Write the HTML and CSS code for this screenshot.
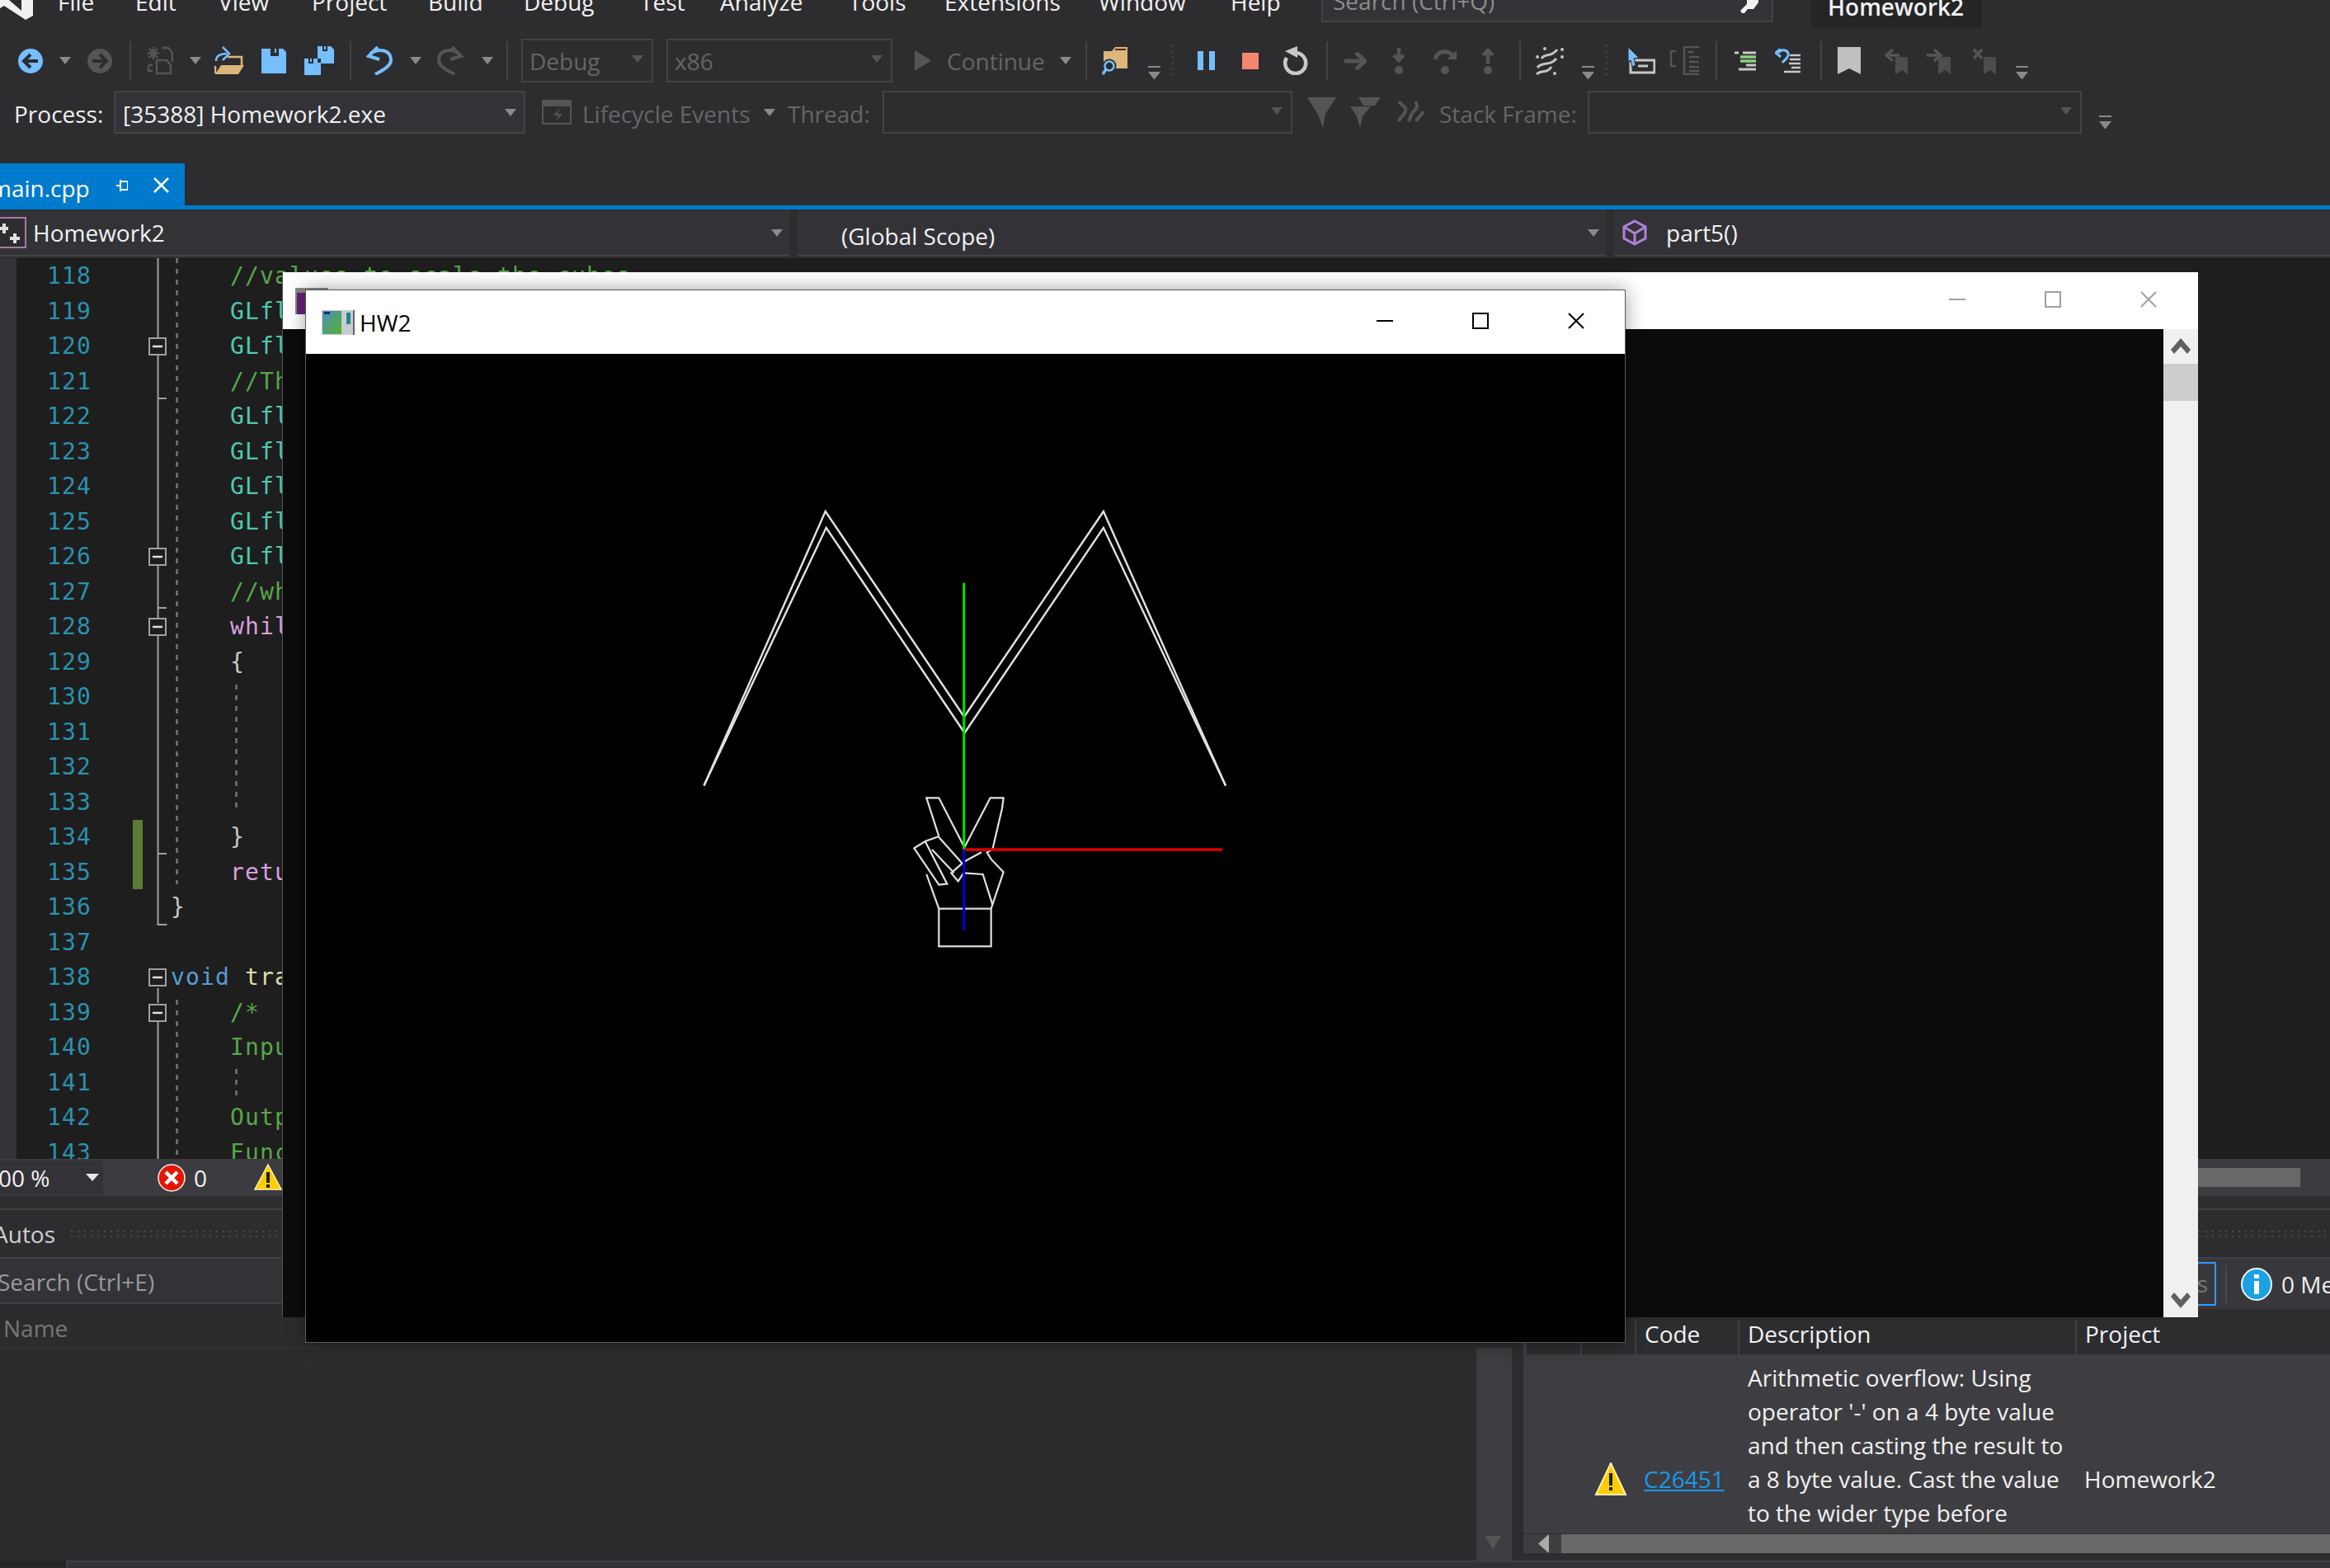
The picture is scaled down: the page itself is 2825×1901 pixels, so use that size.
FILE: index.html
```html
<!DOCTYPE html>
<html lang="en">
<head>
<meta charset="utf-8">
<title>Homework2 - Visual Studio</title>
<link rel="stylesheet" href="styles.css">
</head>
<body>
<div class="ide">
  <header class="menubar">
    <svg class="logo" width="40" height="25" viewBox="0 0 40 25"><path fill="#f1f1f1" d="M0 0h11l15 13V0h14v19l-9 5L5 7 0 10z"/></svg>
    <span class="mi">File</span><span class="mi">Edit</span><span class="mi">View</span><span class="mi">Project</span><span class="mi">Build</span><span class="mi">Debug</span><span class="mi">Test</span><span class="mi">Analyze</span><span class="mi">Tools</span><span class="mi">Extensions</span><span class="mi">Window</span><span class="mi">Help</span>
    <div class="search"><span class="search-text">Search (Ctrl+Q)</span>
      <svg class="search-key" width="34" height="16" viewBox="0 0 34 16"><path fill="#f1f1f1" d="M14 16l-2-3 8-8V0h14v3l-6 8h-7l-4 5z"/></svg></div>
    <span></span>
    <div class="title-tab">Homework2</div>
  </header>

  <div class="toolbar">
    <svg width="30" height="30" viewBox="0 0 30 30"><circle cx="15" cy="15" r="15" fill="#75beff"/><path d="M15 7l-8 8 8 8M8 15h16" fill="none" stroke="#2d2d30" stroke-width="4"/></svg>
    <i class="dd"></i>
    <svg width="30" height="30" viewBox="0 0 30 30"><circle cx="15" cy="15" r="15" fill="#555"/><path d="M15 7l8 8-8 8M22 15H6" fill="none" stroke="#2d2d30" stroke-width="4"/></svg>
    <i class="sep"></i>
    <svg width="32" height="35" viewBox="0 0 32 35"><path d="M8 1v15M1 8.500h14M3 3l10 11M13 3L3 14" stroke="#555" stroke-width="2.500"/><path d="M18 2h8l5 6v11M12 17v16h17V23l-5-6zM2 23v7h5M2 23h5" fill="none" stroke="#555" stroke-width="2.500"/></svg>
    <i class="dd"></i>
    <svg width="36" height="35" viewBox="0 0 36 35"><path d="M16 13h17v10M1 24v9" fill="none" stroke="#dcb67a" stroke-width="2.500"/><path d="M8 23h28l-7 11H1z" fill="#dcb67a"/><path d="M2 18c0-6 4-9 13-9" fill="none" stroke="#75beff" stroke-width="2.500"/><path d="M10 1l8 8-8 8" fill="none" stroke="#75beff" stroke-width="2.500"/></svg>
    <svg width="30" height="30" viewBox="0 0 30 30"><path d="M0 0h11v9h10V0h5l4 4v26H0z" fill="#75beff"/><path d="M16 0h2v5h-2z" fill="#75beff"/></svg>
    <svg width="36" height="35" viewBox="0 0 36 35"><path d="M16 0h6v6h6V0h4l4 4v17H20v-6h-4z" fill="#75beff"/><path d="M24 0h2v4h-2z" fill="#75beff"/><path d="M0 15h5v6h6v-6h5v5h4v15H0z" fill="#75beff"/><path d="M7 15h2v4H7z" fill="#75beff"/></svg>
    <i class="sep"></i>
    <svg width="32" height="35" viewBox="0 0 32 35"><path d="M5 9C15 2 30 4 30 17c0 6-7 11-19 17" fill="none" stroke="#75beff" stroke-width="4"/><path d="M14 1L3 12l13 4" fill="none" stroke="#75beff" stroke-width="4"/></svg>
    <i class="dd"></i>
    <svg width="32" height="35" viewBox="0 0 32 35"><path d="M27 9C17 2 2 4 2 17c0 6 7 11 19 17" fill="none" stroke="#555" stroke-width="4"/><path d="M18 1l11 11-13 4" fill="none" stroke="#555" stroke-width="4"/></svg>
    <i class="dd"></i>
    <i class="sep"></i>
    <div class="combo combo-debug"><span>Debug</span><i class="dd dim"></i></div>
    <div class="combo combo-x86"><span>x86</span><i class="dd dim"></i></div>
    <svg width="20" height="25" viewBox="0 0 20 25"><path d="M0 0l20 12.500L0 25z" fill="#555"/></svg>
    <span class="dim-text">Continue</span>
    <i class="dd"></i>
    <i class="sep"></i>
    <svg width="32" height="35" viewBox="0 0 32 35"><path d="M2 6h10l4-5h15v26H2z" fill="#dcb67a"/><path d="M16 4h13" stroke="#4a3310" stroke-width="2"/><circle cx="9" cy="24" r="7" fill="#2d2d30" stroke="#2d2d30" stroke-width="3"/><circle cx="9" cy="24" r="5.500" fill="#2d2d30" stroke="#75beff" stroke-width="2.500"/><path d="M5 28l-4 6" stroke="#75beff" stroke-width="3.500"/></svg>
    <div class="ov"></div>
    <i class="vgrip"></i>
    <svg width="21" height="23" viewBox="0 0 21 23"><path d="M0 0h7v23H0zM14 0h7v23h-7z" fill="#75beff"/></svg>
    <svg width="20" height="20" viewBox="0 0 20 20"><rect width="20" height="20" fill="#f48771"/></svg>
    <svg width="30" height="35" viewBox="0 0 30 35"><path d="M15 8a12.500 12.500 0 1 1-11 6" fill="none" stroke="#c8c8c8" stroke-width="4.500"/><path d="M2 6l15-6v14z" fill="#c8c8c8"/></svg>
    <i class="sep"></i>
    <svg width="27" height="22" viewBox="0 0 27 22"><path d="M0 11h23" stroke="#555" stroke-width="5"/><path d="M14 1l11 10-11 10" fill="none" stroke="#555" stroke-width="5"/></svg>
    <svg width="16" height="32" viewBox="0 0 16 32"><path d="M8 0v16" stroke="#555" stroke-width="4.500"/><path d="M2 9l6 6 6-6" fill="none" stroke="#555" stroke-width="4.500"/><circle cx="8" cy="27" r="5" fill="#555"/></svg>
    <svg width="30" height="32" viewBox="0 0 30 32"><path d="M3 14C5 3 21 1 26 12" fill="none" stroke="#555" stroke-width="5"/><path d="M17 14h12V3z" fill="#555"/><circle cx="15" cy="27" r="5" fill="#555"/></svg>
    <svg width="16" height="32" viewBox="0 0 16 32"><path d="M8 3v16" stroke="#555" stroke-width="4.500"/><path d="M2 9l6-6 6 6" fill="none" stroke="#555" stroke-width="4.500"/><circle cx="8" cy="27" r="5" fill="#555"/></svg>
    <i class="sep"></i>
    <svg width="35" height="35" viewBox="0 0 35 35"><g fill="none" stroke="#c4c4c4" stroke-width="3"><path d="M8 15C12 8 20 14 27 4"/><path d="M3 26C9 18 18 25 26 15"/><path d="M2 34C8 28 14 34 20 25"/></g><g fill="#c4c4c4"><circle cx="12" cy="3" r="2"/><circle cx="33" cy="4" r="2"/><circle cx="33" cy="13" r="2"/><circle cx="3" cy="13" r="2"/><circle cx="24" cy="33" r="2"/></g></svg>
    <div class="ov"></div>
    <i class="vgrip"></i>
    <svg width="34" height="33" viewBox="0 0 34 33"><path d="M6 16h27v15H4V18" fill="none" stroke="#c8c8c8" stroke-width="3"/><path d="M13 23h12" stroke="#c8c8c8" stroke-width="3"/><path d="M1 0l13 13-6 1 2 8-4 2-2-8-3 2z" fill="#75beff" stroke="#2d2d30"/></svg>
    <svg width="37" height="35" viewBox="0 0 37 35"><g fill="none" stroke="#555" stroke-width="2.500"><path d="M36 1H18v33h18M8 6H2v18h6"/><path d="M22 7h8M24 13h12M24 19h12M24 25h12M24 30h12"/></g></svg>
    <i class="sep"></i>
    <svg width="26" height="24" viewBox="0 0 26 24"><g stroke="#c8c8c8" stroke-width="3" fill="none"><path d="M0 2h5M10 2h16M14 17h12M5 22h21"/></g><path d="M7 7h19M7 12h19" stroke="#90d080" stroke-width="3.500"/></svg>
    <svg width="32" height="30" viewBox="0 0 32 30"><path d="M4 5c4-5 13-4 12 3-1 5-5 6-7 9" fill="none" stroke="#75beff" stroke-width="3"/><path d="M7 0L1 5l6 5" fill="none" stroke="#75beff" stroke-width="3"/><path d="M18 8h13M18 13h13M17 18h14M20 23h11M11 28h20" stroke="#c8c8c8" stroke-width="2.500"/></svg>
    <i class="sep"></i>
    <svg width="28" height="33" viewBox="0 0 28 33"><path d="M0 0h28v33L14 26 0 33z" fill="#c0c0c0"/></svg>
    <svg width="30" height="32" viewBox="0 0 30 32"><path d="M13 11h15v21l-7-5-8 5z" fill="#4d4d4d"/><path d="M18 9H4M10 2L2 9l8 7" fill="none" stroke="#555" stroke-width="3.500"/></svg>
    <svg width="30" height="32" viewBox="0 0 30 32"><path d="M14 11h15v21l-7-5-8 5z" fill="#4d4d4d"/><path d="M0 9h15M9 2l8 7-8 7" fill="none" stroke="#555" stroke-width="3.500"/></svg>
    <svg width="30" height="32" viewBox="0 0 30 32"><path d="M14 11h15v21l-7-5-8 5z" fill="#4d4d4d"/><path d="M2 2l10 11M12 2L2 13" stroke="#555" stroke-width="3.500"/></svg>
    <div class="ov"></div>
  </div>

  <div class="procbar">
    <span class="label">Process:</span>
    <div class="combo combo-proc"><span class="bright">[35388] Homework2.exe</span><i class="dd"></i></div>
    <svg width="36" height="30" viewBox="0 0 36 30"><path d="M1 1h34v28H1z" fill="none" stroke="#555" stroke-width="2"/><path d="M1 1h34v7H1z" fill="#555"/><path d="M22 10l-8 9h6l-4 8 9-10h-6l3-7z" fill="#555"/></svg>
    <span class="dim-text">Lifecycle Events</span>
    <i class="dd"></i>
    <span class="dim-text">Thread:</span>
    <div class="combo combo-thread"><i class="dd dim"></i></div>
    <svg width="35" height="37" viewBox="0 0 35 37"><path d="M0 0h35L22 20l-3 17-5-14z" fill="#555"/></svg>
    <svg width="37" height="37" viewBox="0 0 37 37"><path d="M10 0h27l-7 10H16zM0 11h25l-10 12-3 14-4-14z" fill="#555"/></svg>
    <svg width="36" height="30" viewBox="0 0 36 30"><path d="M4 2c4 6 10 6 8 12s-6 6-8 12M16 26c3-6 3-10 6-12s6-6 2-12M25 26c2-6 8-6 8-12" fill="none" stroke="#555" stroke-width="4"/></svg>
    <span class="dim-text">Stack Frame:</span>
    <div class="combo combo-stack"><i class="dd dim"></i></div>
    <div class="ov"></div>
  </div>

  <div class="tabs">
    <div class="tab"><span class="tab-name">main.cpp</span>
      <svg class="pin" width="14" height="16" viewBox="0 0 14 16"><path d="M5 3h9M5 3v10h9V3M5 8H0M5 1v14" fill="none" stroke="#fff" stroke-width="2"/></svg>
      <svg class="tab-x" width="19" height="19" viewBox="0 0 19 19"><path d="M1 1l17 17M18 1L1 18" stroke="#fff" stroke-width="2.500"/></svg>
    </div>
  </div>

  <div class="nav">
    <div class="nav-cell nav-project">
      <svg width="32" height="38" viewBox="0 0 32 38"><rect x="-6" y="1" width="37" height="36" fill="#2d2d30" stroke="#a77aa8" stroke-width="2"/><path d="M5 8v12M0 14h10M18 20v12M12 26h12" stroke="#e0e0e0" stroke-width="4"/></svg>
      <span class="nav-text">Homework2</span><i class="dd"></i>
    </div>
    <div class="nav-cell nav-scope"><span class="nav-text">(Global Scope)</span><i class="dd"></i></div>
    <div class="nav-cell nav-member">
      <svg width="32" height="32" viewBox="0 0 32 32"><path d="M16 2l13 7v14l-13 7-13-7V9zM3 9l13 8 13-8M16 17v13" fill="none" stroke="#b180d7" stroke-width="3"/></svg>
      <span class="nav-text">part5()</span>
    </div>
  </div>

  <main class="editor">
    <div class="code-line"><span class="ln">118</span><code class="cm">    //values to scale the cubes</code></div>
    <div class="code-line"><span class="ln">119</span><code class="ty">    GLfloat</code></div>
    <div class="code-line"><span class="ln">120</span><code class="ty">    GLfloat</code></div>
    <div class="code-line"><span class="ln">121</span><code class="cm">    //The</code></div>
    <div class="code-line"><span class="ln">122</span><code class="ty">    GLfloat</code></div>
    <div class="code-line"><span class="ln">123</span><code class="ty">    GLfloat</code></div>
    <div class="code-line"><span class="ln">124</span><code class="ty">    GLfloat</code></div>
    <div class="code-line"><span class="ln">125</span><code class="ty">    GLfloat</code></div>
    <div class="code-line"><span class="ln">126</span><code class="ty">    GLfloat</code></div>
    <div class="code-line"><span class="ln">127</span><code class="cm">    //while</code></div>
    <div class="code-line"><span class="ln">128</span><code class="kw">    while</code></div>
    <div class="code-line"><span class="ln">129</span><code class="pn">    {</code></div>
    <div class="code-line"><span class="ln">130</span><code></code></div>
    <div class="code-line"><span class="ln">131</span><code></code></div>
    <div class="code-line"><span class="ln">132</span><code></code></div>
    <div class="code-line"><span class="ln">133</span><code></code></div>
    <div class="code-line"><span class="ln">134</span><code class="pn">    }</code></div>
    <div class="code-line"><span class="ln">135</span><code class="kw">    return</code></div>
    <div class="code-line"><span class="ln">136</span><code class="pn">}</code></div>
    <div class="code-line"><span class="ln">137</span><code></code></div>
    <div class="code-line"><span class="ln">138</span><code><span class="bl">void</span> <span class="fn">transform</span></code></div>
    <div class="code-line"><span class="ln">139</span><code class="cm">    /*</code></div>
    <div class="code-line"><span class="ln">140</span><code class="cm">    Input</code></div>
    <div class="code-line"><span class="ln">141</span><code></code></div>
    <div class="code-line"><span class="ln">142</span><code class="cm">    Output</code></div>
    <div class="code-line"><span class="ln">143</span><code class="cm">    Function</code></div>
    <svg class="gutter" width="342" height="1092" viewBox="0 313 342 1092">
      <rect x="161" y="994" width="12" height="84" fill="#5b7c34"/>
      <g fill="none" stroke="#a0a0a0" stroke-width="2">
        <path d="M191.500 313v96M191.500 431v234M191.500 686v63M191.500 771v350h11M192 483h10M192 737h10M192 1035h10M191.500 1198v18M191.500 1239v166"/>
        <rect x="181" y="410" width="20" height="20" fill="#1e1e1e"/>
        <rect x="181" y="665" width="20" height="20" fill="#1e1e1e"/>
        <rect x="181" y="750" width="20" height="20" fill="#1e1e1e"/>
        <rect x="181" y="1175" width="20" height="20" fill="#1e1e1e"/>
        <rect x="181" y="1218" width="20" height="20" fill="#1e1e1e"/>
        <path d="M185 420h12M185 675h12M185 760h12M185 1185h12M185 1228h12" stroke="#e0e0e0" stroke-width="2.500"/>
      </g>
      <path d="M214.500 313v759M214.500 1212v193M286.500 830v155M286.500 1296v37" fill="none" stroke="#777" stroke-width="2.500" stroke-dasharray="6 7"/>
    </svg>
  </main>

  <div class="status">
    <div class="zoom"><span class="zoom-text">100 %</span><i class="dd light"></i></div>
    <svg class="st-err" width="34" height="34" viewBox="0 0 34 34"><circle cx="17" cy="17" r="16" fill="#e51400" stroke="#f0f0f0" stroke-width="1.500"/><path d="M10 10l14 14M24 10L10 24" stroke="#fff" stroke-width="4.500"/></svg>
    <span class="st-num">0</span>
    <svg class="st-warn" width="34" height="33" viewBox="0 0 34 33"><path d="M17 1l16 30H1z" fill="#ffcc00" stroke="#fff3b0" stroke-width="1.500"/><path d="M15 10h4v13h-4zM15 25h4v4h-4z" fill="#1e1e1e"/></svg>
    <div class="hthumb"></div>
  </div>

  <div class="bottom">
    <section class="autos">
      <div class="pane-title"><span class="pane-name">Autos</span><i class="dots"></i></div>
      <div class="pane-search">Search (Ctrl+E)</div>
      <div class="pane-head">Name</div>
      <div class="pane-list">
        <div class="pane-empty"></div>
        <div class="pane-scroll"><svg width="20" height="16" viewBox="0 0 20 16"><path d="M0 0h20L10 16z" fill="#555"/></svg></div>
      </div>
    </section>
    <section class="errors">
      <div class="pane-title"><i class="dots"></i></div>
      <div class="err-tools">
        <div class="err-btn">0 Warnings</div><i class="err-sep"></i>
        <svg class="err-info" width="38" height="40" viewBox="0 0 38 40"><ellipse cx="19" cy="20" rx="18" ry="19" fill="#1ba1e2" stroke="#eaf6fc" stroke-width="2"/><path d="M16 16h6v16h-6zM16 8h6v5h-6z" fill="#fff"/></svg>
        <span class="err-count">0 Messages</span>
      </div>
      <div class="err-head err-grid"><span></span><span></span><span></span><span class="hcell">Code</span><span class="hcell">Description</span><span class="hcell">Project</span></div>
      <div class="err-row err-grid">
        <span></span><span></span>
        <span class="warn-cell"><svg width="40" height="41" viewBox="0 0 40 41"><path d="M20 1l18 38H2z" fill="#ffcc00" stroke="#fff3b0" stroke-width="2"/><path d="M18 13h4v15h-4zM18 30h4v4h-4z" fill="#1e1e1e"/></svg></span>
        <a class="err-code">C26451</a>
        <span class="err-desc">Arithmetic overflow: Using<br>operator '-' on a 4 byte value<br>and then casting the result to<br>a 8 byte value. Cast the value<br>to the wider type before<br>calling operator '-' to avoid<br>overflow (io.2).</span>
        <span class="err-proj">Homework2</span>
      </div>
      <div class="err-hscroll"><svg width="13" height="23" viewBox="0 0 13 23"><path d="M13 0v23L0 11.500z" fill="#aaa"/></svg><div class="err-thumb"></div></div>
    </section>
  </div>
  <div class="foot"><span class="foot-left"></span><span class="foot-right"></span></div>
</div>

<div class="window console">
  <div class="win-title con-title">
    <svg class="con-icon" width="40" height="32" viewBox="0 0 40 32"><rect width="40" height="32" fill="#8a8a8a"/><rect x="2" y="6" width="36" height="26" fill="#68217a"/></svg>
    <span class="spacer"></span>
    <span class="ctl"><svg width="20" height="20" viewBox="0 0 20 20"><path d="M0 10h20" stroke="#a0a0a0" stroke-width="2"/></svg></span>
    <span class="ctl"><svg width="20" height="20" viewBox="0 0 20 20"><rect x="1" y="1" width="18" height="18" fill="none" stroke="#a0a0a0" stroke-width="2"/></svg></span>
    <span class="ctl"><svg width="20" height="20" viewBox="0 0 20 20"><path d="M1 1l18 18M19 1L1 19" stroke="#a0a0a0" stroke-width="2"/></svg></span>
  </div>
  <div class="con-body">
    <div class="con-text"></div>
    <div class="con-scroll">
      <svg width="24" height="20" viewBox="0 0 24 20"><path d="M12 0l12 14-4 5-8-9-8 9-4-5z" fill="#606060"/></svg>
      <div class="con-thumb"></div>
      <span class="spacer"></span>
      <svg width="24" height="20" viewBox="0 0 24 20"><path d="M12 20L0 6l4-5 8 9 8-9 4 5z" fill="#606060"/></svg>
    </div>
  </div>
</div>

<div class="window hw2">
  <div class="win-title hw2-title">
    <svg class="hw2-icon" width="40" height="30" viewBox="0 0 40 30"><defs><linearGradient id="icg" x1="0" y1="0" x2="1" y2="1"><stop offset="0" stop-color="#4a90b8"/><stop offset="1" stop-color="#58b030"/></linearGradient></defs><rect width="40" height="30" fill="#c8ccd0"/><rect x="1" y="1" width="23" height="28" fill="url(#icg)"/><rect x="3" y="2" width="7" height="3" fill="#202090"/><rect x="30" y="3" width="5" height="14" fill="#2a7f88"/><rect x="38" y="0" width="2" height="30" fill="#666"/></svg>
    <span class="hw2-name">HW2</span>
    <span class="spacer"></span>
    <span class="ctl"><svg width="20" height="20" viewBox="0 0 20 20"><path d="M0 10h20" stroke="#000" stroke-width="2"/></svg></span>
    <span class="ctl"><svg width="20" height="20" viewBox="0 0 20 20"><rect x="1" y="1" width="18" height="18" fill="none" stroke="#000" stroke-width="2"/></svg></span>
    <span class="ctl"><svg width="20" height="20" viewBox="0 0 20 20"><path d="M1 1l18 18M19 1L1 19" stroke="#000" stroke-width="2"/></svg></span>
  </div>
  <svg class="gl" width="1598" height="1198" viewBox="371 429 1598 1198">
    <g fill="none" stroke="#e2e2e2" stroke-width="2.400">
      <path d="M853.500 952.400L1000.800 620 1169 869 1337.900 620 1486 952.400"/>
      <path d="M853.500 952.400L1001.700 639.800 1169.500 888.500 1337.900 639.800 1486 952.400"/>
    </g>
    <g transform="translate(1080 940) scale(.33333)" fill="none" stroke="#e2e2e2" stroke-width="6.600">
      <rect x="175" y="485" width="190" height="137"/>
      <path d="M175 222L130 82h45l93 180 94-180h48l-5 38-35 150-20 10 15 25 45 47-40 118-5 15"/>
      <path d="M130 360l45 125"/>
      <path d="M175 222l-50 18-40 25 90 133 30-3-80-155M150 270l80 85M175 225l85 95-40 35 25 30 20-30 70 5 35 110"/>
      <path d="M265 315l65-35"/>
    </g>
    <path d="M1168.700 706.700V1030" stroke="#00e000" stroke-width="3"/>
    <path d="M1169 1030H1482" stroke="#e00000" stroke-width="3.600"/>
    <path d="M1168.700 1030v97.700" stroke="#0000e0" stroke-width="3"/>
  </svg>
</div>
</body>
</html>
```

FILE: styles.css
```css
* { box-sizing: border-box; }
html, body { margin: 0; padding: 0; }
body {
  width: 2825px;
  height: 1901px;
  overflow: hidden;
  position: relative;
  background: #2d2d30;
  font-family: "Open Sans", "Noto Sans", sans-serif;
  font-size: 28px;
  color: #f1f1f1;
}
i { display: block; font-style: normal; }
.spacer { flex: 1; }

.ide { display: flex; flex-direction: column; height: 1901px; }

/* menu */
.menubar {
  display: grid;
  grid-template-columns: 70px 94px 101px 113px 141px 116px 141px 97px 156px 116px 187px 160px 110px 548px 46px 207px;
  height: 47px;
  align-items: start;
  overflow: hidden;
  flex: none;
}
.mi { line-height: 40px; margin-top: -18px; white-space: nowrap; }
.search {
  height: 27px;
  background: #333337;
  border: 2px solid #434346;
  border-top: 0;
  display: flex;
  justify-content: space-between;
  padding: 0 16px 0 12px;
}
.search-text { line-height: 40px; margin-top: -19px; color: #8c8c8c; }
.title-tab {
  height: 33px;
  background: #252526;
  padding-left: 20px;
  line-height: 16px;
  font-weight: 600;
  overflow: hidden;
}

/* toolbars */
.toolbar {
  flex: none;
  height: 53px;
  display: grid;
  grid-template-columns: 50px 34px 51px 21px 52px 30px 57px 52px 55px 20px 53px 33px 54px 30px 18px 176px 301px 39px 137px 31px 20px 56px 25px 35px 54px 50px 52px 22px 58px 49px 59px 46px 19px 57px 25px 30px 51px 56px 23px 49px 55px 21px 57px 51px 55px 53px 20px;
  align-items: center;
  padding-left: 22px;
}
.dd {
  width: 0;
  height: 0;
  border-left: 7px solid transparent;
  border-right: 7px solid transparent;
  border-top: 9px solid #8a8a8a;
}
.dd.dim { border-top-color: #555; }
.dd.light { border-top-color: #e8e8e8; border-left-width: 8px; border-right-width: 8px; }
.sep { width: 2px; height: 48px; background: #434346; }
.ov { width: 15px; height: 20px; border-top: 2px solid #8a8a8a; align-self: start; margin-top: 33px; }
.ov::after {
  content: "";
  display: block;
  margin-top: 5px;
  border-left: 7.500px solid transparent;
  border-right: 7.500px solid transparent;
  border-top: 9px solid #8a8a8a;
}
.vgrip {
  width: 12px;
  height: 44px;
  background-image: radial-gradient(#47474a 1.200px, transparent 1.700px);
  background-size: 9.500px 7px;
}
.combo {
  height: 53px;
  background: #2d2d30;
  border: 2px solid #434346;
  display: flex;
  align-items: center;
  justify-content: space-between;
  padding: 0 10px 0 8px;
  color: #656565;
}
.combo-debug { width: 160px; }
.combo-x86 { width: 274px; }
.dim-text { color: #656565; white-space: nowrap; }
.bright { color: #f1f1f1; white-space: nowrap; }
.combo .dd { margin-top: -4px; }

.procbar {
  flex: none;
  margin-top: 10px;
  height: 52px;
  display: grid;
  grid-template-columns: 121px 519px 49px 220px 29px 115px 515px 52px 55px 53px 180px 620px 20px;
  align-items: center;
  padding-left: 17px;
}
.procbar > span { padding-top: 4px; }
.label { white-space: nowrap; }
.combo-proc { width: 499px; height: 52px; background: #333337; padding: 4px 9px 0; }
.combo-thread { width: 497px; height: 52px; justify-content: flex-end; }
.combo-stack { width: 599px; height: 52px; justify-content: flex-end; }
.procbar .ov { margin-top: 30px; }

/* document tabs */
.tabs { flex: none; margin-top: 36px; height: 51px; }
.tab {
  width: 224px;
  height: 51px;
  background: #007acc;
  display: flex;
  align-items: center;
  color: #fff;
  overflow: hidden;
}
.tab-name { margin-left: -12px; width: 153px; flex: none; white-space: nowrap; padding-top: 9px; }
.pin { flex: none; margin-top: 2px; }
.tab-x { flex: none; margin: 2px 0 0 31px; }

.nav {
  flex: none;
  border-top: 5px solid #007acc;
  padding-top: 1px;
  height: 62px;
  display: grid;
  grid-template-columns: 957px 980px 869px;
  column-gap: 10px;
}
.nav-cell {
  background: #333337;
  border-bottom: 2px solid #434346;
  display: flex;
  align-items: center;
}
.nav-project { padding-right: 8px; gap: 8px; }
.nav-project .nav-text { flex: 1; }
.nav-scope { padding-left: 53px; padding-right: 8px; justify-content: space-between; }
.nav-scope .nav-text { padding-top: 8px; }
.nav-member { padding-left: 9px; gap: 22px; }
.nav-text { white-space: nowrap; }

/* editor */
.editor {
  flex: none;
  margin-top: 2px;
  padding-top: 1px;
  height: 1092px;
  background: #1e1e1e;
  border-left: 20px solid #333337;
  position: relative;
  overflow: hidden;
  font-family: "DejaVu Sans Mono", monospace;
  font-size: 28px;
  letter-spacing: 1.140px;
}
.code-line { display: flex; height: 42.500px; line-height: 42.500px; }
.ln { width: 187px; padding-left: 37px; color: #2b91af; flex: none; }
.code-line code { font: inherit; white-space: pre; }
.cm { color: #57a64a; }
.ty { color: #4ec9b0; }
.kw { color: #d8a0df; }
.pn { color: #c8c8c8; }
.bl { color: #569cd6; }
.fn { color: #dcdcaa; }
.gutter { position: absolute; left: -20px; top: 0; }

/* status strip under the editor */
.status {
  flex: none;
  height: 45px;
  background: #3c3c40;
  display: flex;
  align-items: center;
}
.zoom {
  width: 125px;
  height: 42px;
  background: #333337;
  display: flex;
  align-items: center;
  justify-content: space-between;
  padding-right: 5px;
  overflow: hidden;
}
.zoom-text { margin-left: -18px; white-space: nowrap; }
.st-err { margin-left: 66px; flex: none; }
.st-num { margin-left: 10px; }
.st-warn { margin-left: 57px; flex: none; }
.hthumb { margin-left: auto; margin-right: 36px; width: 300px; height: 23px; background: #686868; }

/* bottom panes */
.bottom {
  flex: none;
  padding-top: 15px;
  height: 442px;
  display: grid;
  grid-template-columns: 1833px 978px;
  column-gap: 14px;
}
.autos, .errors {
  border-top: 2px solid #3f3f46;
  display: flex;
  flex-direction: column;
  min-width: 0;
  overflow: hidden;
}
.pane-title {
  flex: none;
  height: 59px;
  border-bottom: 2px solid #3f3f46;
  display: flex;
  align-items: center;
}
.pane-name { margin-left: -8px; width: 91px; flex: none; color: #d0d0d0; }
.dots {
  flex: 1;
  height: 12px;
  background-image: radial-gradient(#4b4b4e 1px, transparent 1.500px);
  background-size: 8px 6px;
}
.pane-search {
  flex: none;
  height: 55px;
  padding-top: 4px;
  line-height: 49px;
  background: #333337;
  border-bottom: 2px solid #3f3f46;
  text-indent: -3px;
  color: #999;
}
.pane-head {
  flex: none;
  height: 54px;
  padding: 6px 0 0 4px;
  line-height: 47px;
  color: #777;
  background: #2c2c2e;
  border-bottom: 1px solid #343436;
}
.pane-list { flex: 1; display: flex; background: #2c2c2e; min-height: 0; }
.pane-empty { flex: 1; }
.pane-scroll {
  width: 43px;
  background: #3e3e42;
  display: flex;
  align-items: flex-end;
  padding: 0 0 14px 10px;
}
.err-tools {
  flex: none;
  height: 61px;
  display: flex;
  align-items: center;
  background: #38383c;
  white-space: nowrap;
}
.err-btn {
  flex: none;
  width: 840px;
  height: 53px;
  border: 2px solid #3399ff;
  text-align: right;
  line-height: 49px;
  padding-right: 8px;
  color: #777;
}
.err-sep { flex: none; width: 2px; height: 46px; background: #4a4a4e; margin: 0 17px 0 11px; }
.err-info { flex: none; }
.err-count { margin-left: 11px; flex: none; }
.err-grid {
  display: grid;
  grid-template-columns: 2px 67px 66px 125px 409px 1fr;
}
.err-head { flex: none; height: 41px; margin-top: 14px; background: #2d2d30; line-height: 33px; }
.err-head > span { border-left: 2px solid #3f3f46; padding-left: 10px; }
.err-row {
  flex: none;
  height: 217px;
  background: #3e3e42;
  overflow: hidden;
  align-items: center;
  line-height: 41px;
  padding-top: 8px;
}
.warn-cell { padding-left: 17px; display: flex; }
.err-code { padding-left: 11px; color: #1c97ea; text-decoration: underline; }
.err-desc { padding-left: 12px; white-space: nowrap; height: 287px; }
.err-proj { padding-left: 11px; }
.err-hscroll {
  flex: none;
  height: 23px;
  margin-top: 1px;
  display: flex;
  align-items: center;
  background: #3e3e42;
  padding-left: 18px;
  gap: 15px;
}
.err-thumb { flex: 1; height: 23px; background: #686868; }

.foot { flex: none; height: 9px; display: flex; }
.foot-left { width: 80px; background: #252526; }
.foot-right { flex: 1; background: #333337; border-top: 2px solid #3f3f46; border-left: 2px solid #3f3f46; }

/* floating windows on the desktop */
.window { position: absolute; display: flex; flex-direction: column; }
.console {
  left: 342px;
  top: 330px;
  width: 2323px;
  height: 1267px;
  background: #fff;
  border-left: 1px solid #555;
}
.hw2 {
  left: 370px;
  top: 351px;
  width: 1601px;
  height: 1277px;
  background: #000;
  border: 1px solid #5a5a5a;
  box-shadow: 0 0 22px rgba(0, 0, 0, .38);
}
.win-title {
  flex: none;
  height: 69px;
  background: #fff;
  display: flex;
  align-items: center;
}
.con-title { padding-right: 2px; }
.con-title .ctl { padding-bottom: 3px; }
.hw2-title { height: 77px; padding-right: 1px; }
.hw2-title .ctl { padding-bottom: 3px; }
.con-icon { margin-left: 15px; }
.ctl { width: 116px; display: flex; justify-content: center; }
.hw2-icon { margin-left: 19px; }
.hw2-name { margin-left: 6px; color: #000; font-size: 28px; }
.con-body { flex: 1; display: flex; min-height: 0; }
.con-text { flex: 1; background: #0c0c0c; }
.con-scroll {
  width: 42px;
  background: #f0f0f0;
  display: flex;
  flex-direction: column;
  align-items: center;
  padding: 11px 0 11px;
}
.con-thumb { width: 100%; height: 45px; margin-top: 11px; background: #cdcdcd; }
.gl { display: block; }
```
